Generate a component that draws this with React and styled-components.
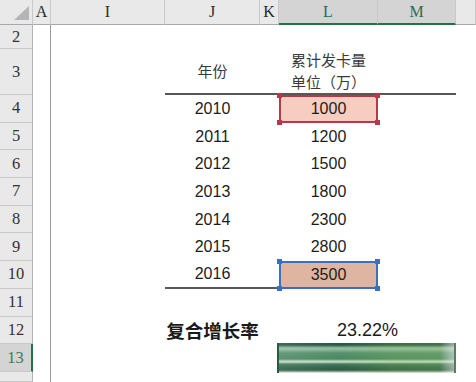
import React from 'react';
import styled, { createGlobalStyle, css } from 'styled-components';

// CSS
const GlobalStyle = createGlobalStyle`
  html, body {
    margin: 0;
    padding: 0;
    background: #ffffff;
    overflow: hidden;
  }
`;

const Sheet = styled.div`
  display: grid;
  grid-template-columns: 33px 18px 114px 95px 19px 99px 78px 1fr;
  grid-template-rows: 25px 24px 46px repeat(10, 27.7px) 1fr;
  width: 476px;
  height: 382px;
  font-family: 'Liberation Sans', Arial, 'Noto Sans CJK SC', sans-serif;
  color: #1c1c1c;
`;

const Corner = styled.div`
  background: #e9e9e9;
  border-right: 1px solid #c9c9c9;
  border-bottom: 1px solid #a9a9a9;
  display: flex;
  align-items: flex-end;
  justify-content: flex-end;
  padding: 0 3px 4px 0;
`;

const ColHead = styled.div`
  background: ${({ selected }) => (selected ? '#d4d4d4' : '#e9e9e9')};
  color: ${({ selected }) => (selected ? '#2d6b4c' : '#2b2b2b')};
  border-right: 1px solid #c9c9c9;
  border-bottom: ${({ selected }) => (selected ? '2px solid #217346' : '1px solid #a9a9a9')};
  display: flex;
  align-items: center;
  justify-content: center;
  font-family: 'Liberation Serif', 'Times New Roman', serif;
  font-size: 16px;
`;

const RowHead = styled.div`
  background: ${({ selected }) => (selected ? '#d4d4d4' : '#e9e9e9')};
  color: ${({ selected }) => (selected ? '#3e7a5c' : '#333333')};
  border-right: ${({ selected }) => (selected ? '2px solid #217346' : '1px solid #b3b3b3')};
  border-bottom: 1px solid #c9c9c9;
  display: flex;
  align-items: center;
  justify-content: center;
  font-family: 'Liberation Serif', 'Times New Roman', serif;
  font-size: 16.5px;
`;

const FrozenCell = styled.div`
  background: #ffffff;
  border-right: 1px solid #9c9c9c;
`;

const Cell = styled.div`
  position: relative;
  display: flex;
  align-items: center;
  justify-content: center;
  font-size: 16px;
  white-space: nowrap;
  ${({ span }) => span && css`grid-column: span ${span};`}
  ${({ ruled }) => ruled && css`border-bottom: 2px solid #575757;`}
  ${({ mark }) => mark === 'red' && css`
    background: #f6cdc0;
    box-shadow: inset 0 0 0 2px #b43a4a;
  `}
  ${({ mark }) => mark === 'blue' && css`
    background: #dfb5a1;
    box-shadow: inset 0 0 0 2px #3b6fc2;
  `}
`;

const Label = styled.div`
  font-family: 'Noto Sans CJK SC', sans-serif;
  font-size: 15px;
  line-height: 22px;
  color: #3a3a3a;
  text-align: center;
`;

const BigLabel = styled.div`
  font-family: 'Noto Sans CJK SC', sans-serif;
  font-size: 18.5px;
  font-weight: 700;
  color: #1a1a1a;
`;

const Rate = styled.div`
  font-size: 18px;
  color: #1a1a1a;
  margin-top: 1px;
`;

const Handle = styled.span`
  position: absolute;
  width: 5px;
  height: 5px;
  background: ${({ color }) => color};
  ${({ v }) => (v === 'top' ? 'top: -2px;' : 'bottom: -2px;')}
  ${({ h }) => (h === 'left' ? 'left: -2px;' : 'right: -2px;')}
`;

const Bar = styled.div`
  grid-column: span 2;
  margin-left: -2px;
  margin-top: -1px;
  height: 30px;
  box-sizing: border-box;
  border-left: 2px solid #2b5a43;
  border-right: 2px solid #5b7b69;
  background:
    linear-gradient(90deg, rgba(255,255,255,0.1) 0%, rgba(255,255,255,0) 35%, rgba(150,200,90,0.2) 65%, rgba(160,205,100,0.22) 92%, rgba(225,232,225,0.45) 97%, rgba(225,232,225,0.6) 100%),
    linear-gradient(180deg,
      #2a5742 0px, #2a5742 2px, #477d63 3px, #98bfa6 5px, #86b394 7px,
      #55906c 10px, #4a8763 16px, #b2d3b9 18px, #c4dec8 19px, #45795d 21px,
      #31664c 24px, #2a5b43 27px, #889e92 28.5px, #ffffff 30px);
`;

const Triangle = () => (
  <svg width="15" height="14" viewBox="0 0 15 14">
    <polygon points="15,0 15,14 0,14" fill="#b5b5b5" />
  </svg>
);

const Marker = ({ color }) => (
  <>
    <Handle color={color} v="top" h="left" />
    <Handle color={color} v="top" h="right" />
    <Handle color={color} v="bottom" h="left" />
    <Handle color={color} v="bottom" h="right" />
  </>
);

/* Data */
const columns = [
  { label: 'A' },
  { label: 'I' },
  { label: 'J' },
  { label: 'K' },
  { label: 'L', selected: true },
  { label: 'M', selected: true },
  { label: '' },
];

const cards = [
  ['2010', '1000'],
  ['2011', '1200'],
  ['2012', '1500'],
  ['2013', '1800'],
  ['2014', '2300'],
  ['2015', '2800'],
  ['2016', '3500'],
];


/* SCREEN */
function App() {
  return (
    <>
      <GlobalStyle />
      <Sheet>
        {/* Column headers */}
        <Corner><Triangle /></Corner>
        {columns.map((c, i) => (
          <ColHead key={i} selected={c.selected}>{c.label}</ColHead>
        ))}

        {/* Row 2 */}
        <RowHead>2</RowHead>
        <FrozenCell />
        <Cell /><Cell /><Cell /><Cell /><Cell /><Cell />

        {/* Row 3 : headings */}
        <RowHead>3</RowHead>
        <FrozenCell />
        <Cell />
        <Cell ruled><Label>年份</Label></Cell>
        <Cell ruled />
        <Cell ruled>
          <Label>累计发卡量<br />单位（万）</Label>
        </Cell>
        <Cell ruled />
        <Cell />

        {/* Rows 4 - 10 : data */}
        {cards.map(([year, count], index) => {
          const last = index === cards.length - 1;
          const mark = index === 0 ? 'red' : last ? 'blue' : undefined;
          return (
            <React.Fragment key={year}>
              <RowHead>{index + 4}</RowHead>
              <FrozenCell />
              <Cell />
              <Cell ruled={last}>{year}</Cell>
              <Cell ruled={last} />
              <Cell mark={mark}>
                {count}
                {mark && <Marker color={mark === 'red' ? '#b43a4a' : '#3b6fc2'} />}
              </Cell>
              <Cell />
              <Cell />
            </React.Fragment>
          );
        })}

        {/* Row 11 */}
        <RowHead>11</RowHead>
        <FrozenCell />
        <Cell /><Cell /><Cell /><Cell /><Cell /><Cell />

        {/* Row 12 : growth rate */}
        <RowHead>12</RowHead>
        <FrozenCell />
        <Cell />
        <Cell><BigLabel>复合增长率</BigLabel></Cell>
        <Cell />
        <Cell span={2}><Rate>23.22%</Rate></Cell>
        <Cell />

        {/* Row 13 : data bar */}
        <RowHead selected>13</RowHead>
        <FrozenCell />
        <Cell /><Cell /><Cell />
        <Bar />
        <Cell />

        {/* Row 14 (cut off) */}
        <RowHead />
        <FrozenCell />
        <Cell /><Cell /><Cell /><Cell /><Cell /><Cell />
      </Sheet>
    </>
  );
}

export default App;
